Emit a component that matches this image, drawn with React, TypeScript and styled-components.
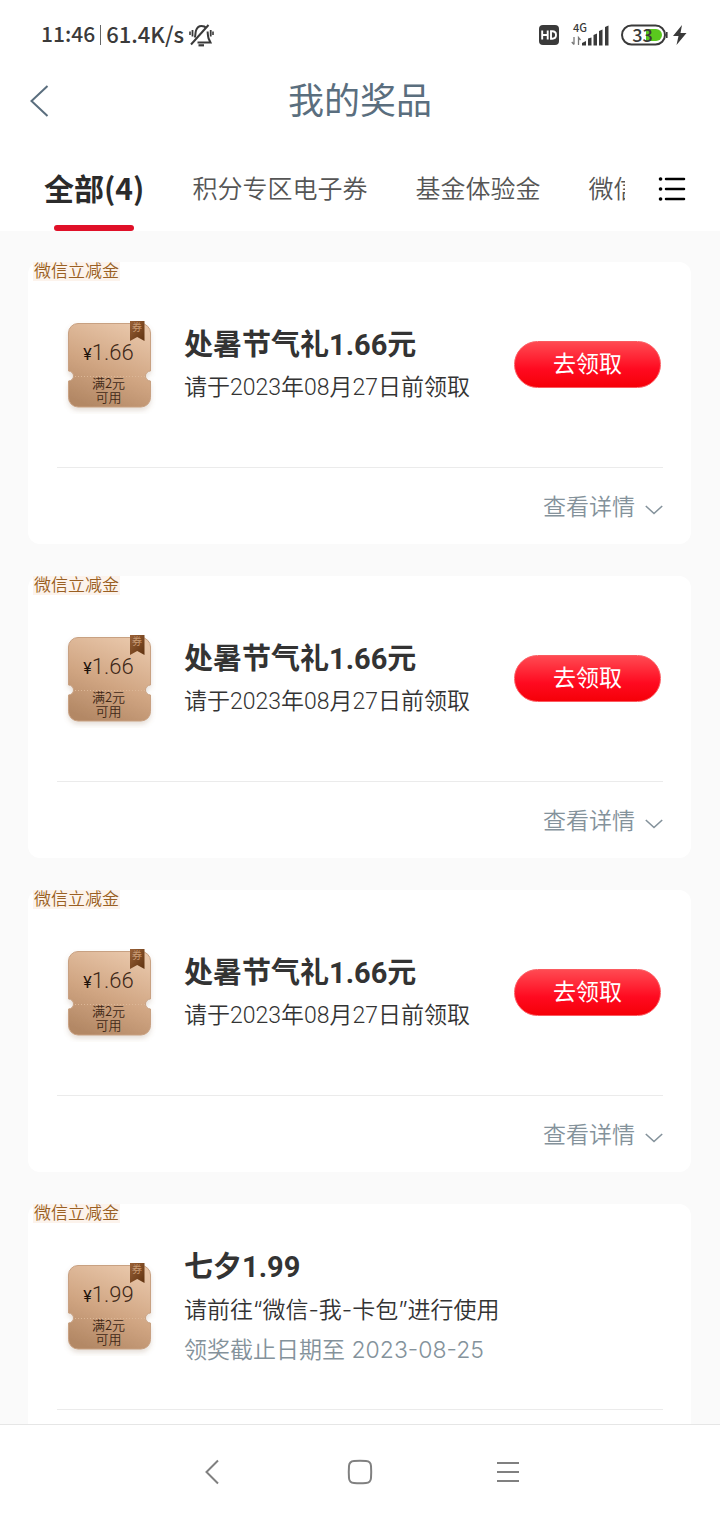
import React from 'react';
import styled, { createGlobalStyle } from 'styled-components';

const CJK = '"Noto Sans CJK SC", sans-serif';
const MIXED = 'Roboto, "Noto Sans CJK SC", sans-serif';
const WIDE = 'Inter, "Noto Sans CJK SC", sans-serif';

const GlobalStyle = createGlobalStyle`
  *, *::before, *::after { box-sizing: border-box; }
  body { margin: 0; background: #fff; font-family: ${MIXED}; color: #333; }
  button { margin: 0; padding: 0; border: 0; background: none; font: inherit; color: inherit; cursor: pointer; }
  h1, h2, p { margin: 0; }
  svg { display: block; flex: none; }
`;

const Screen = styled.div`
  display: flex;
  flex-direction: column;
  height: 100vh;
  overflow: hidden;
`;

const StatusBar = styled.div`
  display: flex;
  flex: none;
  align-items: center;
  justify-content: space-between;
  height: 70px;
  padding: 0 33px 0 41px;
  font-family: ${CJK};
  color: #3a3a3a;
`;

const StatusGroup = styled.div<{ $gap: number }>`
  display: flex;
  align-items: center;
  gap: ${(p) => p.$gap}px;
`;

const StatusText = styled.span<{ $size: number }>`
  padding-bottom: 4px;
  font-size: ${(p) => p.$size}px;
  line-height: 32px;
  font-weight: 500;
`;

const StatusDivider = styled.span`
  width: 1px;
  height: 20px;
  background: #666;
`;

const Signal = styled.div`
  display: flex;
  flex-direction: column;
  width: 38px;
  height: 24px;
  position: relative;
  svg { margin-top: 2px; }
`;

const SignalLabel = styled.span`
  position: absolute;
  left: 2px;
  top: -2px;
  font-size: 11px;
  line-height: 12px;
  font-weight: 500;
`;

const Battery = styled.div`
  position: relative;
  display: flex;
  align-items: center;
  justify-content: center;
  width: 47px;
  height: 22px;
`;

const BatteryShape = styled.svg`
  position: absolute;
  inset: 0;
`;

const BatteryText = styled.span`
  position: relative;
  padding: 0 4px 2px 0;
  font-size: 18px;
  line-height: 22px;
  font-weight: 500;
`;

const Header = styled.header`
  display: grid;
  flex: none;
  grid-template-columns: 78px 1fr 78px;
  align-items: center;
  height: 62px;
`;

const BackButton = styled.button`
  display: flex;
  align-items: center;
  height: 62px;
  padding-left: 30px;
`;

const PageTitle = styled.h1`
  padding-top: 2px;
  font-size: 36px;
  line-height: 48px;
  font-weight: 400;
  text-align: center;
  color: #5a6e7e;
`;

const TabBar = styled.nav`
  display: flex;
  flex: none;
  height: 99px;
`;

const TabStrip = styled.div`
  display: flex;
  flex: 1;
  gap: 48px;
  min-width: 0;
  padding-left: 44px;
  overflow-x: auto;
  scrollbar-width: none;
`;

const Tab = styled.button<{ $active?: boolean }>`
  position: relative;
  flex: none;
  padding-top: 10px;
  font-family: ${CJK};
  font-size: ${(p) => (p.$active ? 30 : 25)}px;
  font-weight: ${(p) => (p.$active ? 700 : 350)};
  color: ${(p) => (p.$active ? '#2b2b2b' : '#555')};
  white-space: nowrap;
  &::after {
    content: '';
    display: ${(p) => (p.$active ? 'block' : 'none')};
    position: absolute;
    left: 50%;
    bottom: 0;
    width: 80px;
    height: 6px;
    margin-left: -40px;
    border-radius: 3px;
    background: #e01028;
  }
`;

const AllTabsButton = styled.button`
  display: flex;
  flex: none;
  align-items: center;
  justify-content: center;
  width: 95px;
  padding: 14px 2px 0 0;
`;

const PrizeList = styled.main`
  display: flex;
  flex: 1;
  flex-direction: column;
  gap: 32px;
  min-height: 0;
  padding: 31px 29px 31px 28px;
  overflow-y: auto;
  scrollbar-width: none;
  background: #fafafa;
`;

const Card = styled.article`
  position: relative;
  flex: none;
  padding: 0 28px 0 29px;
  border-radius: 12px;
  background: #fff;
`;

const Tag = styled.span`
  position: absolute;
  left: 5px;
  top: 0;
  padding: 0 1px;
  font-size: 17px;
  line-height: 19px;
  font-weight: 350;
  color: #9a5f22;
  background: #fcf3ec;
`;

const CardBody = styled.div`
  display: flex;
  align-items: center;
  height: 205px;
  padding: 0 2px 0 6px;
`;

const Coupon = styled.div`
  position: relative;
  display: flex;
  flex: none;
  flex-direction: column;
  align-items: center;
  width: 93px;
  height: 98px;
  padding: 25px 2px 0 0;
  color: #3f2817;
`;

const CouponShape = styled.svg`
  position: absolute;
  left: 0;
  top: 0;
`;

const CouponRibbonText = styled.span`
  position: absolute;
  left: 69px;
  top: 6px;
  font-size: 10px;
  line-height: 12px;
  color: #c99b74;
`;

const CouponAmount = styled.span`
  position: relative;
  font-size: 22px;
  line-height: 24px;
  font-weight: 300;
`;

const Currency = styled.span`
  font-size: 16px;
  font-weight: 400;
  color: #1c120b;
`;

const CouponRule = styled.span`
  position: relative;
  margin-top: 9px;
  font-family: ${CJK};
  font-size: 13px;
  line-height: 14px;
  font-weight: 350;
  text-align: center;
`;

const Info = styled.div`
  flex: 1;
  min-width: 0;
  padding-left: 28px;
  white-space: nowrap;
`;

const PrizeTitle = styled.h2`
  font-size: 29px;
  line-height: 46px;
  font-weight: 700;
`;

const PrizeText = styled.p<{ $muted?: boolean; $wide?: boolean }>`
  font-family: ${(p) => (p.$wide ? WIDE : MIXED)};
  font-size: 23px;
  line-height: 40px;
  font-weight: 350;
  color: ${(p) => (p.$muted ? '#84929b' : '#333')};
`;

const ClaimButton = styled.button`
  flex: none;
  width: 147px;
  height: 47px;
  border: 1px solid #fb5a60;
  border-radius: 24px;
  font-size: 23px;
  line-height: 44px;
  color: #fff;
  background: linear-gradient(#ff4a52, #ff0a20 60%, #f60008);
`;

const CardFooter = styled.footer`
  display: flex;
  justify-content: flex-end;
  height: 77px;
  border-top: 1px solid #ebebeb;
`;

const DetailButton = styled.button`
  display: flex;
  align-items: center;
  gap: 10px;
  padding-bottom: 3px;
  font-size: 23px;
  font-weight: 350;
  color: #84929b;
  svg { margin-top: 11px; }
`;

const SystemNav = styled.nav`
  display: flex;
  flex: none;
  justify-content: center;
  height: 96px;
  padding-bottom: 2px;
  border-top: 1px solid #e6e6e6;
`;

const NavButton = styled.button`
  display: flex;
  align-items: center;
  justify-content: center;
  width: 148px;
`;

function MutedBell() {
  return (
    <svg width="25" height="23" viewBox="0 0 25 23" fill="none" stroke="#3a3a3a" strokeWidth="2">
      <path d="M5.800 13.500C6.600 11.500 6.200 9 7 6.500C8 3.500 10 2 12.500 2C14.500 2 16.200 2.700 17.300 4" />
      <path d="M18.600 7.500C18.800 9.500 18.800 12 19.500 14.300L21.500 18.500H8.500" />
      <path d="M2 20.500L19.500 1" />
      <path d="M9.500 21.300H15" strokeWidth="2.200" />
      <path d="M3.500 6V12.500M21.700 6V12.500" strokeWidth="1.800" />
      <path d="M1 7.500V11M24 7.500V11" strokeWidth="1.600" />
    </svg>
  );
}

function HdIcon() {
  return (
    <svg width="20" height="20" viewBox="0 0 20 20">
      <rect width="20" height="20" rx="4" fill="#3a3a3a" />
      <path d="M3.200 5.500V14.500M8.700 5.500V14.500M3.200 10H8.700M12 6.300V13.700H13.200C15.800 13.700 17 12.500 17 10S15.800 6.300 13.200 6.300Z" fill="none" stroke="#fff" strokeWidth="1.900" />
    </svg>
  );
}

function SignalIcon() {
  return (
    <svg width="38" height="22" viewBox="0 0 38 22" fill="#3a3a3a">
      <path d="M11 20.500V18L15 16V20.500ZM17 20.500V13.500L20.500 12.500V20.500ZM22.500 20.500V10L26 8.500V20.500ZM28 20.500V6L31.500 4.500V20.500ZM34 20.500V2L37.500 .5V20.500Z" />
      <path d="M3 12V19.500M.8 17L3 19.500M7.500 20V12.500L9.500 15" fill="none" stroke="#777" strokeWidth="1.300" />
    </svg>
  );
}

function Ticket() {
  return (
    <CouponShape width="93" height="98" viewBox="0 0 93 98">
      <defs>
        <linearGradient id="ticketFill" x1=".7" y1="0" x2=".3" y2="1">
          <stop offset="0" stopColor="#e8c6a9" />
          <stop offset=".55" stopColor="#d0a582" />
          <stop offset="1" stopColor="#b38865" />
        </linearGradient>
        <linearGradient id="ribbonFill" x1="0" y1="0" x2="1" y2="1">
          <stop offset="0" stopColor="#9a6238" />
          <stop offset="1" stopColor="#5f3210" />
        </linearGradient>
        <filter id="ticketShadow" x="-.2" y="-.2" width="1.400" height="1.400">
          <feDropShadow dx="0" dy="3" stdDeviation="2.500" floodColor="#8a6a50" floodOpacity=".22" />
        </filter>
      </defs>
      <path
        filter="url(#ticketShadow)"
        d="M15 7.500H78A9.500 9.500 0 0 1 87.500 17V55A5 5 0 0 0 87.500 65V81.500A9.500 9.500 0 0 1 78 91H15A9.500 9.500 0 0 1 5.500 81.500V65A5 5 0 0 0 5.500 55V17A9.500 9.500 0 0 1 15 7.500Z"
        fill="url(#ticketFill)"
        stroke="#c8a182"
      />
      <path d="M12 60.500H82" stroke="#dcb797" strokeDasharray="1 2" />
      <path d="M67 5H81.500V25L74.200 21L67 25Z" fill="url(#ribbonFill)" />
    </CouponShape>
  );
}

interface Prize {
  title: string;
  amount: string;
  lines: string[];
  claimable: boolean;
}

const claim: Prize = {
  title: '处暑节气礼1.66元',
  amount: '1.66',
  lines: ['请于2023年08月27日前领取'],
  claimable: true,
};

const prizes: Prize[] = [
  claim,
  claim,
  claim,
  {
    title: '七夕1.99',
    amount: '1.99',
    lines: ['请前往“微信-我-卡包”进行使用', '领奖截止日期至 2023-08-25'],
    claimable: false,
  },
];

function PrizeCard({ prize }: { prize: Prize }) {
  return (
    <Card>
      <Tag>微信立减金</Tag>
      <CardBody>
        <Coupon>
          <Ticket />
          <CouponRibbonText>券</CouponRibbonText>
          <CouponAmount>
            <Currency>¥</Currency>
            {prize.amount}
          </CouponAmount>
          <CouponRule>
            满2元
            <br />
            可用
          </CouponRule>
        </Coupon>
        <Info>
          <PrizeTitle>{prize.title}</PrizeTitle>
          {prize.lines.map((line, i) => (
            <PrizeText key={line} $muted={i > 0} $wide={!prize.claimable}>
              {line}
            </PrizeText>
          ))}
        </Info>
        {prize.claimable && <ClaimButton>去领取</ClaimButton>}
      </CardBody>
      <CardFooter>
        <DetailButton>
          查看详情
          <svg width="18" height="10" viewBox="0 0 18 10" fill="none" stroke="#84929b" strokeWidth="1.600">
            <path d="M.8 1L9 8.500L17.200 1" />
          </svg>
        </DetailButton>
      </CardFooter>
    </Card>
  );
}

export default function App() {
  return (
    <Screen>
      <GlobalStyle />
      <StatusBar>
        <StatusGroup $gap={5}>
          <StatusText $size={21}>11:46</StatusText>
          <StatusDivider />
          <StatusText $size={22}>61.4K/s</StatusText>
          <MutedBell />
        </StatusGroup>
        <StatusGroup $gap={12}>
          <HdIcon />
          <Signal>
            <SignalLabel>4G</SignalLabel>
            <SignalIcon />
          </Signal>
          <StatusGroup $gap={5}>
            <Battery>
              <BatteryShape width="47" height="22" viewBox="0 0 47 22">
                <path d="M25 5H35A6 6 0 0 1 35 17H25Z" fill="#5ac81e" />
                <rect x="1" y="1.500" width="43" height="19" rx="9.500" fill="none" stroke="#3a3a3a" strokeWidth="2" />
                <path d="M45.800 8V14" stroke="#3a3a3a" strokeWidth="1.600" />
              </BatteryShape>
              <BatteryText>33</BatteryText>
            </Battery>
            <svg width="14" height="20" viewBox="0 0 14 20">
              <path d="M9 0L0 11H5.500L3.500 20L13.500 8H7.500Z" fill="#3a3a3a" />
            </svg>
          </StatusGroup>
        </StatusGroup>
      </StatusBar>
      <Header>
        <BackButton aria-label="返回">
          <svg width="19" height="32" viewBox="0 0 19 32" fill="none" stroke="#5a6e7e" strokeWidth="2">
            <path d="M17.500 1L1.500 16L17.500 31" />
          </svg>
        </BackButton>
        <PageTitle>我的奖品</PageTitle>
      </Header>
      <TabBar>
        <TabStrip>
          <Tab $active>全部(4)</Tab>
          <Tab>积分专区电子券</Tab>
          <Tab>基金体验金</Tab>
          <Tab>微信立减金</Tab>
        </TabStrip>
        <AllTabsButton aria-label="全部分类">
          <svg width="28" height="24" viewBox="0 0 28 24" stroke="#000" strokeWidth="2.500" strokeLinecap="round">
            <path d="M8 2H26M8 12H26M8 22H26" />
            <path d="M2.500 2H2.600M2.500 12H2.600M2.500 22H2.600" strokeWidth="3.600" />
          </svg>
        </AllTabsButton>
      </TabBar>
      <PrizeList>
        {prizes.map((prize, i) => (
          <PrizeCard key={i} prize={prize} />
        ))}
      </PrizeList>
      <SystemNav>
        <NavButton aria-label="后退">
          <svg width="14" height="26" viewBox="0 0 14 26" fill="none" stroke="#808080" strokeWidth="2">
            <path d="M13 1.500L1.500 13L13 24.500" />
          </svg>
        </NavButton>
        <NavButton aria-label="主页">
          <svg width="26" height="26" viewBox="0 0 26 26" fill="none" stroke="#808080" strokeWidth="2">
            <path d="M7 2C11 1.700 15 1.700 19 2C22.500 2.200 23.800 3.500 24 7C24.300 11 24.300 15 24 19C23.800 22.500 22.500 23.800 19 24C15 24.300 11 24.300 7 24C3.500 23.800 2.200 22.500 2 19C1.700 15 1.700 11 2 7C2.200 3.500 3.500 2.200 7 2Z" />
          </svg>
        </NavButton>
        <NavButton aria-label="菜单">
          <svg width="22" height="20" viewBox="0 0 22 20" stroke="#808080" strokeWidth="2">
            <path d="M0 1H22M0 10H22M0 19H22" />
          </svg>
        </NavButton>
      </SystemNav>
    </Screen>
  );
}
